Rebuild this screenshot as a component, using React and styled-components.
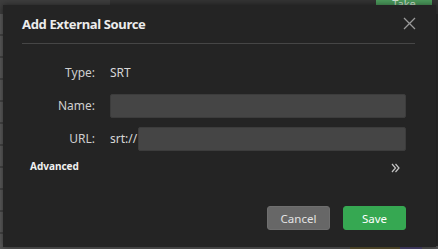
import React, { useState } from 'react';
import styled, { createGlobalStyle } from 'styled-components';

const GlobalStyle = createGlobalStyle`
  html, body {
    margin: 0;
    padding: 0;
    background: #2b2b2b;
    font-family: "Noto Sans", "Open Sans", sans-serif;
  }
`;

const Page = styled.div`
  position: relative;
  width: 438px;
  height: 249px;
  overflow: hidden;
  background: #2a2a2a;
  display: flex;
  flex-direction: column;
`;

const TopBar = styled.div`
  height: 14px;
  display: flex;
  background: #333;
`;

const TopSegment = styled.div`
  width: 110px;
  background: #3e3e3e;
`;

const TakeButton = styled.div`
  margin-left: auto;
  margin-right: 6px;
  width: 56px;
  background: #4c9a5c;
  color: #cfe3d2;
  font-size: 11px;
  text-align: center;
  line-height: 8px;
  overflow: hidden;
`;

const Backdrop = styled.div`
  flex: 1;
  display: flex;
`;

const SideStrip = styled.div`
  width: 3px;
  background: repeating-linear-gradient(#5a5a5a 0 20px, #444 20px 22px);
`;

const BottomStrip = styled.div`
  height: 3px;
  display: flex;
  background: #555;
`;

const BottomChip = styled.div`
  width: ${p => p.$w}px;
  margin-left: ${p => p.$ml || 0}px;
  background: ${p => p.$c};
`;

const Modal = styled.div`
  position: absolute;
  left: 3px;
  top: 5px;
  width: 433px;
  height: 242px;
  background: #242424;
  box-shadow: 0 0 6px rgba(0, 0, 0, 0.5);
  box-sizing: border-box;
  padding: 0 21px 0 19px;
  display: flex;
  flex-direction: column;
  color: #d6d6d6;
`;

const Header = styled.div`
  height: 39px;
  box-sizing: border-box;
  display: flex;
  align-items: center;
  justify-content: space-between;
  border-bottom: 1px solid #464646;
  padding-bottom: 1px;
`;

const Title = styled.h2`
  margin: 0;
  font-size: 13px;
  font-weight: 700;
  color: #ececec;
  letter-spacing: -0.35px;
`;

const CloseButton = styled.button`
  background: none;
  border: none;
  padding: 0;
  margin-right: -2px;
  width: 16px;
  height: 16px;
  display: flex;
  align-items: center;
  justify-content: center;
  cursor: pointer;
`;

const Form = styled.div`
  margin-top: 17px;
  padding-right: 9px;
  display: grid;
  grid-template-columns: 73px 1fr;
  column-gap: 15px;
  row-gap: 10px;
`;

const Label = styled.div`
  height: 23px;
  display: flex;
  align-items: center;
  justify-content: flex-end;
  font-size: 12px;
  color: #cfcfcf;
`;

const Value = styled.div`
  height: 23px;
  display: flex;
  align-items: center;
  font-size: 12px;
  color: #d8d8d8;
`;

const Prefix = styled.span`
  margin-right: 1px;
`;

const Input = styled.input`
  flex: 1;
  height: 24px;
  box-sizing: border-box;
  background: #454545;
  border: 1px solid #3c3c3c;
  border-radius: 2px;
  color: #ddd;
  font-size: 12px;
  padding: 0 6px;
  outline: none;
  font-family: inherit;
`;

const AdvancedRow = styled.div`
  margin-top: 8px;
  padding-left: 8px;
  padding-right: 14px;
  display: flex;
  align-items: center;
  justify-content: space-between;
  height: 16px;
`;

const AdvancedLabel = styled.span`
  font-size: 10px;
  font-weight: 700;
  color: #f0f0f0;
`;

const Chevrons = styled.svg`
  margin-top: 3px;
  margin-right: 1px;
`;

const Footer = styled.div`
  margin-top: 32px;
  padding-right: 9px;
  display: flex;
  justify-content: flex-end;
  gap: 13px;
`;

const Button = styled.button`
  width: 63px;
  height: 24px;
  border-radius: 3px;
  font-family: inherit;
  font-size: 11.5px;
  cursor: pointer;
  border: 1px solid ${p => (p.$primary ? '#36a852' : '#6f6f6f')};
  background: ${p => (p.$primary ? '#36a852' : '#676767')};
  color: ${p => (p.$primary ? '#ffffff' : '#e4e4e4')};
`;

const CloseIcon = () => (
  <svg width="13" height="13" viewBox="0 0 13 13">
    <path d="M1 1 L12 12 M12 1 L1 12" stroke="#9a9a9a" strokeWidth="1.3" fill="none" />
  </svg>
);

const ChevronsIcon = () => (
  <Chevrons width="9" height="10" viewBox="0 0 9 10">
    <path d="M1 1 L4.5 5 L1 9 M4.5 1 L8 5 L4.5 9" stroke="#c4c4c4" strokeWidth="1.2" fill="none" />
  </Chevrons>
);

const App = () => {
  const [name, setName] = useState('');
  const [url, setUrl] = useState('');

  return (
    <>
      <GlobalStyle />
      <Page>
        <TopBar>
          <TopSegment />
          <TakeButton>Take</TakeButton>
        </TopBar>
        <Backdrop>
          <SideStrip />
        </Backdrop>
        <BottomStrip>
          <BottomChip $w={50} $ml={350} $c="#5c5230" />
          <BottomChip $w={22} $c="#4b4470" />
        </BottomStrip>

        <Modal>
          <Header>
            <Title>Add External Source</Title>
            <CloseButton aria-label="Close">
              <CloseIcon />
            </CloseButton>
          </Header>

          <Form>
            <Label>Type:</Label>
            <Value>SRT</Value>

            <Label>Name:</Label>
            <Value>
              <Input value={name} onChange={e => setName(e.target.value)} />
            </Value>

            <Label>URL:</Label>
            <Value>
              <Prefix>srt://</Prefix>
              <Input value={url} onChange={e => setUrl(e.target.value)} />
            </Value>
          </Form>

          <AdvancedRow>
            <AdvancedLabel>Advanced</AdvancedLabel>
            <ChevronsIcon />
          </AdvancedRow>

          <Footer>
            <Button>Cancel</Button>
            <Button $primary>Save</Button>
          </Footer>
        </Modal>
      </Page>
    </>
  );
};

export default App;
